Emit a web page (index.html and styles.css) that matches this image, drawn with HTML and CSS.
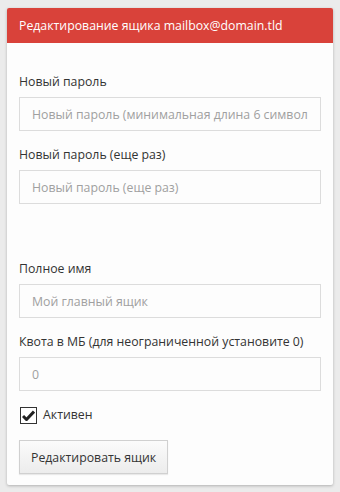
FILE: index.html
```html
<!DOCTYPE html>
<html lang="ru">
<head>
    <meta charset="UTF-8">
    <meta name="viewport" content="width=device-width, initial-scale=1.0">
    <title>Редактирование ящика</title>
    <link rel="stylesheet" href="styles.css">
</head>
<body>
    <div class="panel">
        <div class="panel-heading">Редактирование ящика mailbox@domain.tld</div>
        <form class="panel-body">
            <div class="form-group">
                <label for="password">Новый пароль</label>
                <input type="password" id="password" placeholder="Новый пароль (минимальная длина 6 символов)">
            </div>
            <div class="form-group">
                <label for="password2">Новый пароль (еще раз)</label>
                <input type="password" id="password2" placeholder="Новый пароль (еще раз)">
            </div>
            <div class="spacer"></div>
            <div class="form-group">
                <label for="name">Полное имя</label>
                <input type="text" id="name" placeholder="Мой главный ящик">
            </div>
            <div class="form-group">
                <label for="quota">Квота в МБ (для неограниченной установите 0)</label>
                <input type="text" id="quota" placeholder="0">
            </div>
            <label class="checkbox">
                <span class="box">
                    <svg width="13" height="11" viewBox="0 0 13 11"><path d="M1 6 L4.5 9.5 L12 1.5" fill="none" stroke="#222" stroke-width="3"/></svg>
                </span>
                Активен
            </label>
            <button type="submit">Редактировать ящик</button>
        </form>
    </div>
</body>
</html>
```

FILE: styles.css
```css
body {
    margin: 0;
    padding: 8px 7px;
    background: #ebebeb;
    font-family: "Open Sans", Arial, sans-serif;
    font-size: 12.3px;
    color: #333;
}
.panel {
    background: #fdfdfd;
    box-shadow: 0 1px 3px rgba(0, 0, 0, 0.25);
    border-radius: 2px;
}
.panel-heading {
    background: #d9423a;
    color: #fff;
    height: 35px;
    line-height: 35px;
    padding: 0 12px;
    border-radius: 2px 2px 0 0;
}
.panel-body {
    padding: 29px 12px 11px;
}
.form-group {
    margin-bottom: 14px;
}
label {
    display: block;
    line-height: 20px;
    margin-bottom: 5px;
}
input {
    display: block;
    box-sizing: border-box;
    width: 100%;
    height: 34px;
    margin: 0;
    padding: 0 12px;
    border: 1px solid #dcdcdc;
    background: #fdfdfd;
    font: inherit;
    color: #555;
}
input::placeholder {
    color: #a0a0a0;
}
.spacer {
    height: 41px;
}
.checkbox {
    display: flex;
    align-items: center;
    gap: 6px;
    margin: 14px 0 15px 1px;
}
.box {
    display: flex;
    align-items: center;
    justify-content: center;
    width: 15px;
    height: 15px;
    border: 1px solid #333;
    background: #fff;
}
button {
    height: 34px;
    padding: 0 11px;
    border: 1px solid #d0d0d0;
    background: linear-gradient(#fbfbfb, #ececec);
    box-shadow: 0 1px 1px rgba(0, 0, 0, 0.08);
    font: inherit;
    color: #333;
    cursor: pointer;
}
```
